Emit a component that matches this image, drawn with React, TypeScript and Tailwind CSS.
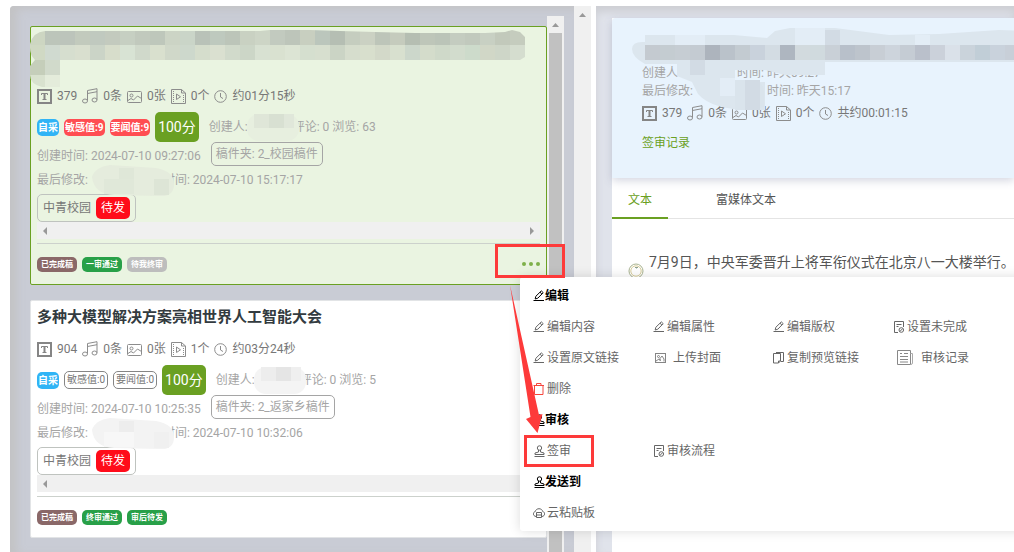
import React from "react";

const stories = [
  {
    id: 1,
    active: true,
    title: "",
    words: "379",
    videos: "0个",
    duration: "约01分15秒",
    sensitive: "敏感值:9",
    news: "要闻值:9",
    comments: "评论: 0",
    views: "浏览: 63",
    created: "2024-07-10 09:27:06",
    updated: "2024-07-10 15:17:17",
    folder: "2_校园稿件",
    tags: [
      { name: "已完成稿", color: "bg-[#8a6868]" },
      { name: "一审通过", color: "bg-[#28a048]" },
      { name: "待我终审", color: "bg-[#bdbdbd]" },
    ],
  },
  {
    id: 2,
    active: false,
    title: "多种大模型解决方案亮相世界人工智能大会",
    words: "904",
    videos: "1个",
    duration: "约03分24秒",
    sensitive: "敏感值:0",
    news: "要闻值:0",
    comments: "评论: 0",
    views: "浏览: 5",
    created: "2024-07-10 10:25:35",
    updated: "2024-07-10 10:32:06",
    folder: "2_返家乡稿件",
    tags: [
      { name: "已完成稿", color: "bg-[#8a6868]" },
      { name: "终审通过", color: "bg-[#28a048]" },
      { name: "审后待发", color: "bg-[#28a048]" },
    ],
  },
];

const TextIcon = () => (
  <svg width="15" height="15" viewBox="0 0 15 15" fill="none" stroke="#858585">
    <rect x="1" y="1" width="13" height="13" strokeWidth="2" />
    <path d="M4.500 6V4.500h6V6" />
    <path d="M7.500 4v7" strokeWidth="2" />
    <path d="M5.500 10.500h4" />
  </svg>
);

const MusicIcon = () => (
  <svg width="16" height="16" viewBox="0 0 16 16" fill="none" stroke="#8c8c8c">
    <path d="M5.500 12.500V2.500L15 .7v11M5.500 5.500L15 3.700" />
    <ellipse cx="3" cy="13" rx="2.500" ry="2" />
    <ellipse cx="12.500" cy="12" rx="2.500" ry="2" />
  </svg>
);

const ImageIcon = () => (
  <svg width="15" height="15" viewBox="0 0 15 15" fill="none" stroke="#8c8c8c">
    <rect x="0.500" y="2.500" width="14" height="11" rx="1" />
    <circle cx="4.500" cy="6.500" r="1.500" />
    <path d="M1 11.500l3-2 2.500 1.500L10.500 7l4 2.500" />
  </svg>
);

const VideoIcon = () => (
  <svg width="15" height="15" viewBox="0 0 15 15" fill="none" stroke="#8c8c8c">
    <path d="M.5 .5h10L14.500 4v10.500H.5z" />
    <path d="M10.500 .5V4h4" />
    <path d="M2.500 2v12M12.500 6v8" strokeDasharray="1 1" />
    <path d="M5.500 5v5.500l4-2.700z" />
  </svg>
);

const ClockIcon = () => (
  <svg width="13" height="13" viewBox="0 0 13 13" fill="none" stroke="#8c8c8c">
    <circle cx="6.500" cy="6.500" r="5.800" />
    <path d="M6.500 3v4l2.500 1.500" />
  </svg>
);

const PenIcon = () => (
  <svg width="12" height="12" viewBox="0 0 12 12" fill="none" stroke="currentColor">
    <path d="M2.200 9l.6-2.700L8.300 .9l1.900 1.800L4.800 8.200zM7 2.200l1.900 1.800" />
    <path d="M.5 10.500h10.500" />
  </svg>
);

const PictureIcon = () => (
  <svg width="18" height="12" viewBox="0 0 18 12" fill="none" stroke="#858585">
    <rect x="2.500" y="1.500" width="10" height="9" />
    <circle cx="5.500" cy="4.500" r="1" />
    <path d="M3 9l3-2 2 1.500M7 9V6.500L9 4l2 3v2.500" />
  </svg>
);

const FormIcon = () => (
  <svg width="12" height="12" viewBox="0 0 12 12" fill="none" stroke="currentColor">
    <path d="M5 11.500H1.500V.5h9V6M3.500 3.500h5M3.500 5.500h2" />
    <circle cx="8.300" cy="9" r="2.300" />
    <path d="M7 10.300l2.600-2.600" />
  </svg>
);

const CopyIcon = () => (
  <svg width="12" height="12" viewBox="0 0 12 12" fill="none" stroke="currentColor">
    <path d="M.5 1.500h7v7.500l-2 2h-5zM5.500 11V9h2" />
    <path d="M3 .5h7.500v9H8" />
  </svg>
);

const RecordIcon = () => (
  <svg width="26" height="16" viewBox="0 0 26 16" fill="none" stroke="#888">
    <path d="M4.500 .5h13v14h-13z" />
    <path d="M17.500 3.500h2v9.500q0 1.500-2 1.500" stroke="#aaa" />
    <path d="M7 3.500h2M11 3.500h4M7 6.500h8M7 9.500h8M7 12h8" />
  </svg>
);

const TrashIcon = () => (
  <svg width="12" height="12" viewBox="0 0 12 12" fill="none" stroke="#f5463c">
    <path d="M.5 2.500h10.500M3.500 2.500v-2h4.500v2M1.500 2.500v9h8.500v-9" />
  </svg>
);

const StampIcon = () => (
  <svg width="12" height="12" viewBox="0 0 12 12" fill="none" stroke="currentColor">
    <circle cx="6.500" cy="3" r="2.200" />
    <path d="M5.500 5v2L2 8v1.500h9V8L7.500 7V5M1.500 11.500h10" />
  </svg>
);

const CloudIcon = () => (
  <svg width="12" height="12" viewBox="0 0 12 12" fill="none" stroke="currentColor">
    <path d="M3 9.500C-.5 9-.2 5 2.300 4.500 3 .8 9 .8 9.700 4.500 12.200 5 12.500 9 9 9.500" />
    <path d="M3.500 5.500h5v5h-5zM3.500 8h5" />
  </svg>
);

const menu = [
  {
    name: "编辑",
    icon: <PenIcon />,
    items: [
      { name: "编辑内容", icon: <PenIcon /> },
      { name: "编辑属性", icon: <PenIcon /> },
      { name: "编辑版权", icon: <PenIcon /> },
      { name: "设置未完成", icon: <FormIcon /> },
      { name: "设置原文链接", icon: <PenIcon /> },
      { name: "上传封面", icon: <PictureIcon /> },
      { name: "复制预览链接", icon: <CopyIcon /> },
      { name: "审核记录", icon: <RecordIcon /> },
      { name: "删除", icon: <TrashIcon /> },
    ],
  },
  {
    name: "审核",
    icon: <StampIcon />,
    items: [
      { name: "签审", icon: <StampIcon />, marked: true },
      { name: "审核流程", icon: <FormIcon /> },
    ],
  },
  {
    name: "发送到",
    icon: <StampIcon />,
    items: [{ name: "云粘贴板", icon: <CloudIcon /> }],
  },
];

// mosaic colours, one entry for each 15px cell
const titleTop = ["#cdd6c2", "#bcc5ba", "#bcc4bb", "#c2cabd", "#c0c9bf", "#c3cabe", "#c6cfc2", "#c1c9bd", "#bec7bb", "#ccd4c5", "#cad5c8", "#b9c2b8", "#bec9be", "#bcc5b9", "#c9d1c2", "#cdd5c6", "#c2cabf", "#bdc5ba", "#c8cfc0", "#bbc6bc", "#b5beb3", "#c5cdbf", "#cbd1c3", "#bdc5b9", "#c5cbbd", "#b5beb2", "#bec6b9", "#bbc4b8", "#c4ccc0", "#c1c9bd", "#c8d0c3", "#c2c9bb", "#c5ccbe"];
const titleBottom = ["#d0d9c4", "#d0dad0", "#d6decf", "#d9dfcf", "#cbd4c7", "#d7ddcb", "#d8e3d4", "#d0d9cb", "#d9e0ce", "#d0d8c9", "#cdd8cc", "#d5ddcc", "#dae0d0", "#d1dacb", "#ccd6c7", "#d8e1d2", "#d9e1d0", "#dce4d4", "#d5dfcf", "#d7dfcf", "#cbd4c5", "#d6ddcd", "#d8dfcd", "#d3d9c9", "#d8e0cf", "#ccd7cb", "#d4dccb", "#cfd9c9", "#d2dccd", "#cddbcb", "#d1d7c7", "#ced6c8", "#d5ddcf"];
const summaryCells = ["#c4cad0", "#c4ccd1", "#c6cdd3", "#c4cbd2", "#adb4bd", "#bac2ca", "#c3cbd1", "#c9d2dc", "#d3dce3", "#aeb6c0", "#d2dade", "#d0dade", "#c9d0d7", "#b8c0ca", "#bdc4cc", "#c8ced5", "#cdd4dc", "#c5ccd4", "#bac0cb", "#cbd1da", "#dae1e9", "#cad3db", "#c1ced7", "#c9d2dc", "#c8cfd8", "#b2b9c2"];

const TitleMosaic = () => (
  <svg className="-ml-[7px] mt-[3px] shrink-0" width="495" height="57" viewBox="0 0 495 57" aria-hidden="true">
    <defs>
      <clipPath id="title-shape">
        <path d="M0 14Q3 2 15 1L230 1 250-1 310 1 345 2 385 3 455 3 475 2 482 0 490 2 495 7V27L490 30H30V57H12Q0 54 0 45L0 36 5 30Q0 25 0 18z" />
      </clipPath>
    </defs>
    <g clipPath="url(#title-shape)">
      {titleTop.map((fill, i) => (
        <rect key={i} x={i * 15} y="0" width="15" height="15" fill={fill} />
      ))}
      {titleBottom.map((fill, i) => (
        <rect key={i} x={i * 15} y="15" width="15" height="15" fill={fill} />
      ))}
      <rect x="0" y="30" width="15" height="15" fill="#c5ceba" />
      <rect x="15" y="30" width="15" height="15" fill="#d1dacb" />
      <rect x="0" y="45" width="15" height="12" fill="#d9e2cf" />
      <rect x="15" y="45" width="15" height="12" fill="#e4ecdb" />
    </g>
  </svg>
);

const SummaryMosaic = () => (
  <svg className="absolute top-[10px] left-5" width="410" height="84" viewBox="0 0 410 84" aria-hidden="true">
    <path d="M13 7h89l33 3 8-7 15-3h45l54 7 50-1 60-4 25 1 18 5v26H193v13h-40l-20-5h-30v12h30V82h-13Q80 82 66 66L60 54 45 48V36L13 36Q0 29 0 21T13 14z" fill="#dce6ee" />
    <path d="M103 52h17q12 2 12 12v15l-12 3h-17z" fill="#dae4ec" />
    <path d="M43 7h30v10H43zM163 0h30v17h-30zM283 7h15v10h-15zM88 50h15v18H88z" fill="#e3edf6" />
    <path d="M58 32h15v15H58zM193 2h15v15h-15zM113 52h15v30h-15z" fill="#d2dbe4" />
    {summaryCells.map((fill, i) => (
      <rect key={i} x={13 + i * 15} y="17" width="15" height="15" fill={fill} />
    ))}
  </svg>
);

const NameMosaic = ({ active }: { active: boolean }) => (
  <svg className="absolute -top-1.5 -left-0.5" width="54" height="28" viewBox="0 0 54 28" aria-hidden="true">
    <rect x="1" y="1" width="52" height="27" rx="12" fill={active ? "#e7efdf" : "#f4f4f4"} />
    <path d="M8 1h15v14H8z" fill={active ? "#dfe6d8" : "#ededed"} />
    <path d="M23 1h15v14H23z" fill={active ? "#d8e0d2" : "#e5e5e5"} />
    <path d="M38 1h10v14H38z" fill={active ? "#e0e7da" : "#efefef"} />
  </svg>
);

const EditorMosaic = ({ active }: { active: boolean }) => (
  <svg className="absolute -top-1.5 left-0.5" width="86" height="34" viewBox="0 0 86 34" aria-hidden="true">
    <path d="M2 12Q5 2 20 0L66 3Q84 6 84 19T70 31L24 30Q4 29 2 12z" fill={active ? "#e5ecdd" : "#f3f3f3"} />
    <path d="M14 14h30v15H14z" fill={active ? "#e0e8d9" : "#f7f7f7"} />
    <path d="M29 3h15v11H29z" fill={active ? "#dfe7d8" : "#ededed"} />
    <path d="M64 14h15v16H64z" fill={active ? "#dde5d6" : "#f0f0f0"} />
  </svg>
);

const Stats = ({ words, videos, duration }: { words: string; videos: string; duration: string }) => (
  <div className="flex items-center gap-[5px] whitespace-nowrap text-[#777]">
    <TextIcon />
    <span>{words}</span>
    <MusicIcon />
    <span>0条</span>
    <ImageIcon />
    <span>0张</span>
    <VideoIcon />
    <span>{videos}</span>
    <ClockIcon />
    <span>{duration}</span>
  </div>
);

const StoryCard = ({ item }: { item: any }) => {
  const level = item.active
    ? "rounded-[5px] bg-[#ff4d52] px-px text-[10px] leading-[17px] font-bold text-white"
    : "rounded-[5px] border border-[#858585] px-0.5 text-[10px] leading-4 text-[#777]";
  return (
    <article
      className={
        item.active
          ? "rounded-xs border border-[#6aa022] bg-[#eaf4e1] px-1.5"
          : "rounded-xs border border-[#e2e4e6] bg-white px-1.5"
      }
    >
      {item.title ? (
        <h2 className="h-8 text-[15px] leading-8 font-bold text-[#333b40]">{item.title}</h2>
      ) : (
        <div className="flex h-[53px] items-start">
          <TitleMosaic />
        </div>
      )}
      <div className="flex h-8 items-center">
        <Stats words={item.words} videos={item.videos} duration={item.duration} />
      </div>
      <div className="flex h-[30px] items-center gap-[5px] whitespace-nowrap">
        <span className="rounded-[5px] bg-[#30b4f6] px-px text-[10px] leading-[17px] font-bold text-white">
          自采
        </span>
        <span className={level}>{item.sensitive}</span>
        <span className={level}>{item.news}</span>
        <span className="rounded-[5px] bg-[#6aa022] px-[3px] text-sm leading-[30px] text-white">
          100分
        </span>
        <div className="flex pl-[5px] text-[#a5a5a5]">
          <span>创建人:</span>
          <span className="relative w-[45px]">
            <NameMosaic active={item.active} />
          </span>
          <span>
            {item.comments} {item.views}
          </span>
        </div>
      </div>
      <div className="flex h-6 items-center gap-[10px] whitespace-nowrap text-[#a5a5a5]">
        <span className="pt-1">创建时间: {item.created}</span>
        <span className="rounded-[5px] border border-[#a5a5a5] px-1 leading-[22px]">
          稿件夹: {item.folder}
        </span>
      </div>
      <div className="flex h-7 items-center whitespace-nowrap text-[#a5a5a5]">
        <span>最后修改:</span>
        <span className="relative z-10 w-[75px] leading-[18px]">
          &nbsp;
          <EditorMosaic active={item.active} />
        </span>
        <span>时间: {item.updated}</span>
      </div>
      <div className="flex">
        <div className="flex h-7 items-center gap-[5px] rounded-[5px] border border-[#bfc3bf] px-[5px] text-[#777]">
          中青校园
          <span className="rounded-[5px] bg-[#ff0c1a] px-[5px] leading-[22px] text-white">待发</span>
        </div>
      </div>
      <div className="flex h-[17px] items-center justify-between bg-[#f0f0f0] px-1.5">
        <svg width="4" height="8" viewBox="0 0 4 8" fill="#999">
          <path d="M4 0v8L0 4z" />
        </svg>
        <svg width="4" height="8" viewBox="0 0 4 8" fill="#999">
          <path d="M0 0v8l4-4z" />
        </svg>
      </div>
      <div className="mt-1 flex h-[41px] items-center gap-[5px] border-t border-[#ccd1cc]">
        {item.tags.map((tag: any) => (
          <span
            key={tag.name}
            className={`${tag.color} rounded-[5px] px-1 text-[8px] leading-[15px] font-bold text-white`}
          >
            {tag.name}
          </span>
        ))}
        <button type="button" aria-label="更多" className="ml-auto flex gap-[3px]">
          <i className="size-1 rounded-full bg-[#7fb04a]" />
          <i className="size-1 rounded-full bg-[#7fb04a]" />
          <i className="size-1 rounded-full bg-[#7fb04a]" />
        </button>
      </div>
    </article>
  );
};

const ActionMenu = () => (
  <div className="absolute top-[271px] left-[calc(100%-71px)] z-20 w-[520px] rounded-[3px] bg-white py-[3px] pl-[13px] shadow-[0_0_12px_rgba(0,0,0,0.14)]">
    {menu.map((group) => (
      <section key={group.name}>
        <h3 className="flex h-[31px] items-center font-bold text-black">
          {group.icon}
          {group.name}
        </h3>
        <div className="grid grid-cols-[repeat(4,120px)]">
          {group.items.map((item: any) => (
            <button
              key={item.name}
              type="button"
              className="relative flex h-[31px] items-center gap-0.5 whitespace-nowrap text-[#666]"
            >
              {item.icon}
              {item.name}
              {item.marked && (
                <span className="absolute top-0 -left-[9px] h-8 w-[70px] border-3 border-[#fd3a3a]" />
              )}
            </button>
          ))}
        </div>
      </section>
    ))}
  </div>
);

const ScrollUp = () => (
  <svg className="mx-auto" width="7" height="4" viewBox="0 0 7 4" fill="#999">
    <path d="M0 4h7L3.500 0z" />
  </svg>
);

const Bullet = () => (
  <svg width="16" height="16" viewBox="0 0 16 16" fill="none">
    <circle cx="8" cy="8" r="7" stroke="#a9b390" />
    <circle cx="8" cy="8" r="5.200" stroke="#d9cf9c" />
    <path d="M7 4.500h3M8.500 4.500v1" stroke="#8da08f" />
  </svg>
);

const App = () => {
  return (
    <div className="h-screen overflow-hidden bg-white pt-1.5 pl-[10px] font-[Roboto,'Noto_Sans_CJK_SC',sans-serif] text-xs">
      <main className="grid h-full grid-cols-[581fr_418fr] gap-[5px]">
        <div className="relative flex min-w-0">
          <div className="flex min-w-0 flex-1 overflow-hidden rounded-tl-sm bg-[#c9ccd5] pt-[10px] pr-[10px] pl-5 shadow-[inset_7px_3px_8px_#c3c3c5]">
            <div className="flex min-w-0 flex-1 flex-col gap-[15px] pt-[10px]">
              {stories.map((item) => (
                <StoryCard key={item.id} item={item} />
              ))}
            </div>
            <div className="flex w-[17px] flex-col bg-[#f0f0f0]">
              <div className="flex h-[17px] items-center">
                <ScrollUp />
              </div>
              <div className="mx-0.5 flex-1 bg-[#c1c1c1]" />
            </div>
          </div>
          <div className="w-[17px] bg-[#f0f0f0] pt-[7px]">
            <ScrollUp />
          </div>

          <ActionMenu />
          <span className="absolute top-[238px] right-[26px] z-30 h-[34px] w-[70px] border-3 border-[#fd3a3a]" />
          <svg
            className="absolute top-[279px] right-12 z-30"
            width="34"
            height="149"
            viewBox="0 0 34 149"
            fill="#fd3a3a"
            aria-hidden="true"
          >
            <path d="M1 0L30 130 33.500 129 28.500 148 17 134 21.500 132z" />
          </svg>
        </div>

        <div className="min-w-0 bg-[#e0e3eb] pt-3 pl-4 shadow-[inset_0_6px_9px_#cdced3]">
          <div className="flex h-full flex-col bg-white">
            <header className="relative rounded-tl-sm bg-[#e8f3fd] px-[30px] pt-[46px] pb-[22px] text-[#a5a5a5] shadow-[0_3px_8px_rgba(90,100,140,0.25)]">
              <div className="flex h-[18px] items-center gap-[59px] whitespace-nowrap">
                <span>创建人</span>
                <span>时间: 昨天09:27</span>
              </div>
              <div className="flex h-[18px] items-center gap-[74px] whitespace-nowrap">
                <span>最后修改:</span>
                <span>时间: 昨天15:17</span>
              </div>
              <div className="flex h-[26px] items-center">
                <Stats words="379" videos="0个" duration="共约00:01:15" />
              </div>
              <a href="#records" className="mt-1 inline-block leading-[26px] text-[#6aa022]">
                签审记录
              </a>
              <SummaryMosaic />
            </header>
            <nav className="flex border-b border-[#e4e4e4]">
              <button type="button" className="-mb-px h-[41px] border-b-2 border-[#6aa022] px-4 pt-1 text-[#6aa022]">
                文本
              </button>
              <button type="button" className="ml-8 h-10 px-4 pt-1 text-[#555]">
                富媒体文本
              </button>
            </nav>
            <div className="px-4 pt-8">
              <div className="flex gap-[5px]">
                <div className="pt-3">
                  <Bullet />
                </div>
                <p className="text-sm leading-[22px] whitespace-nowrap text-[#555]">
                  7月9日，中央军委晋升上将军衔仪式在北京八一大楼举行。
                </p>
              </div>
            </div>
          </div>
        </div>
      </main>
    </div>
  );
};

export default App;
